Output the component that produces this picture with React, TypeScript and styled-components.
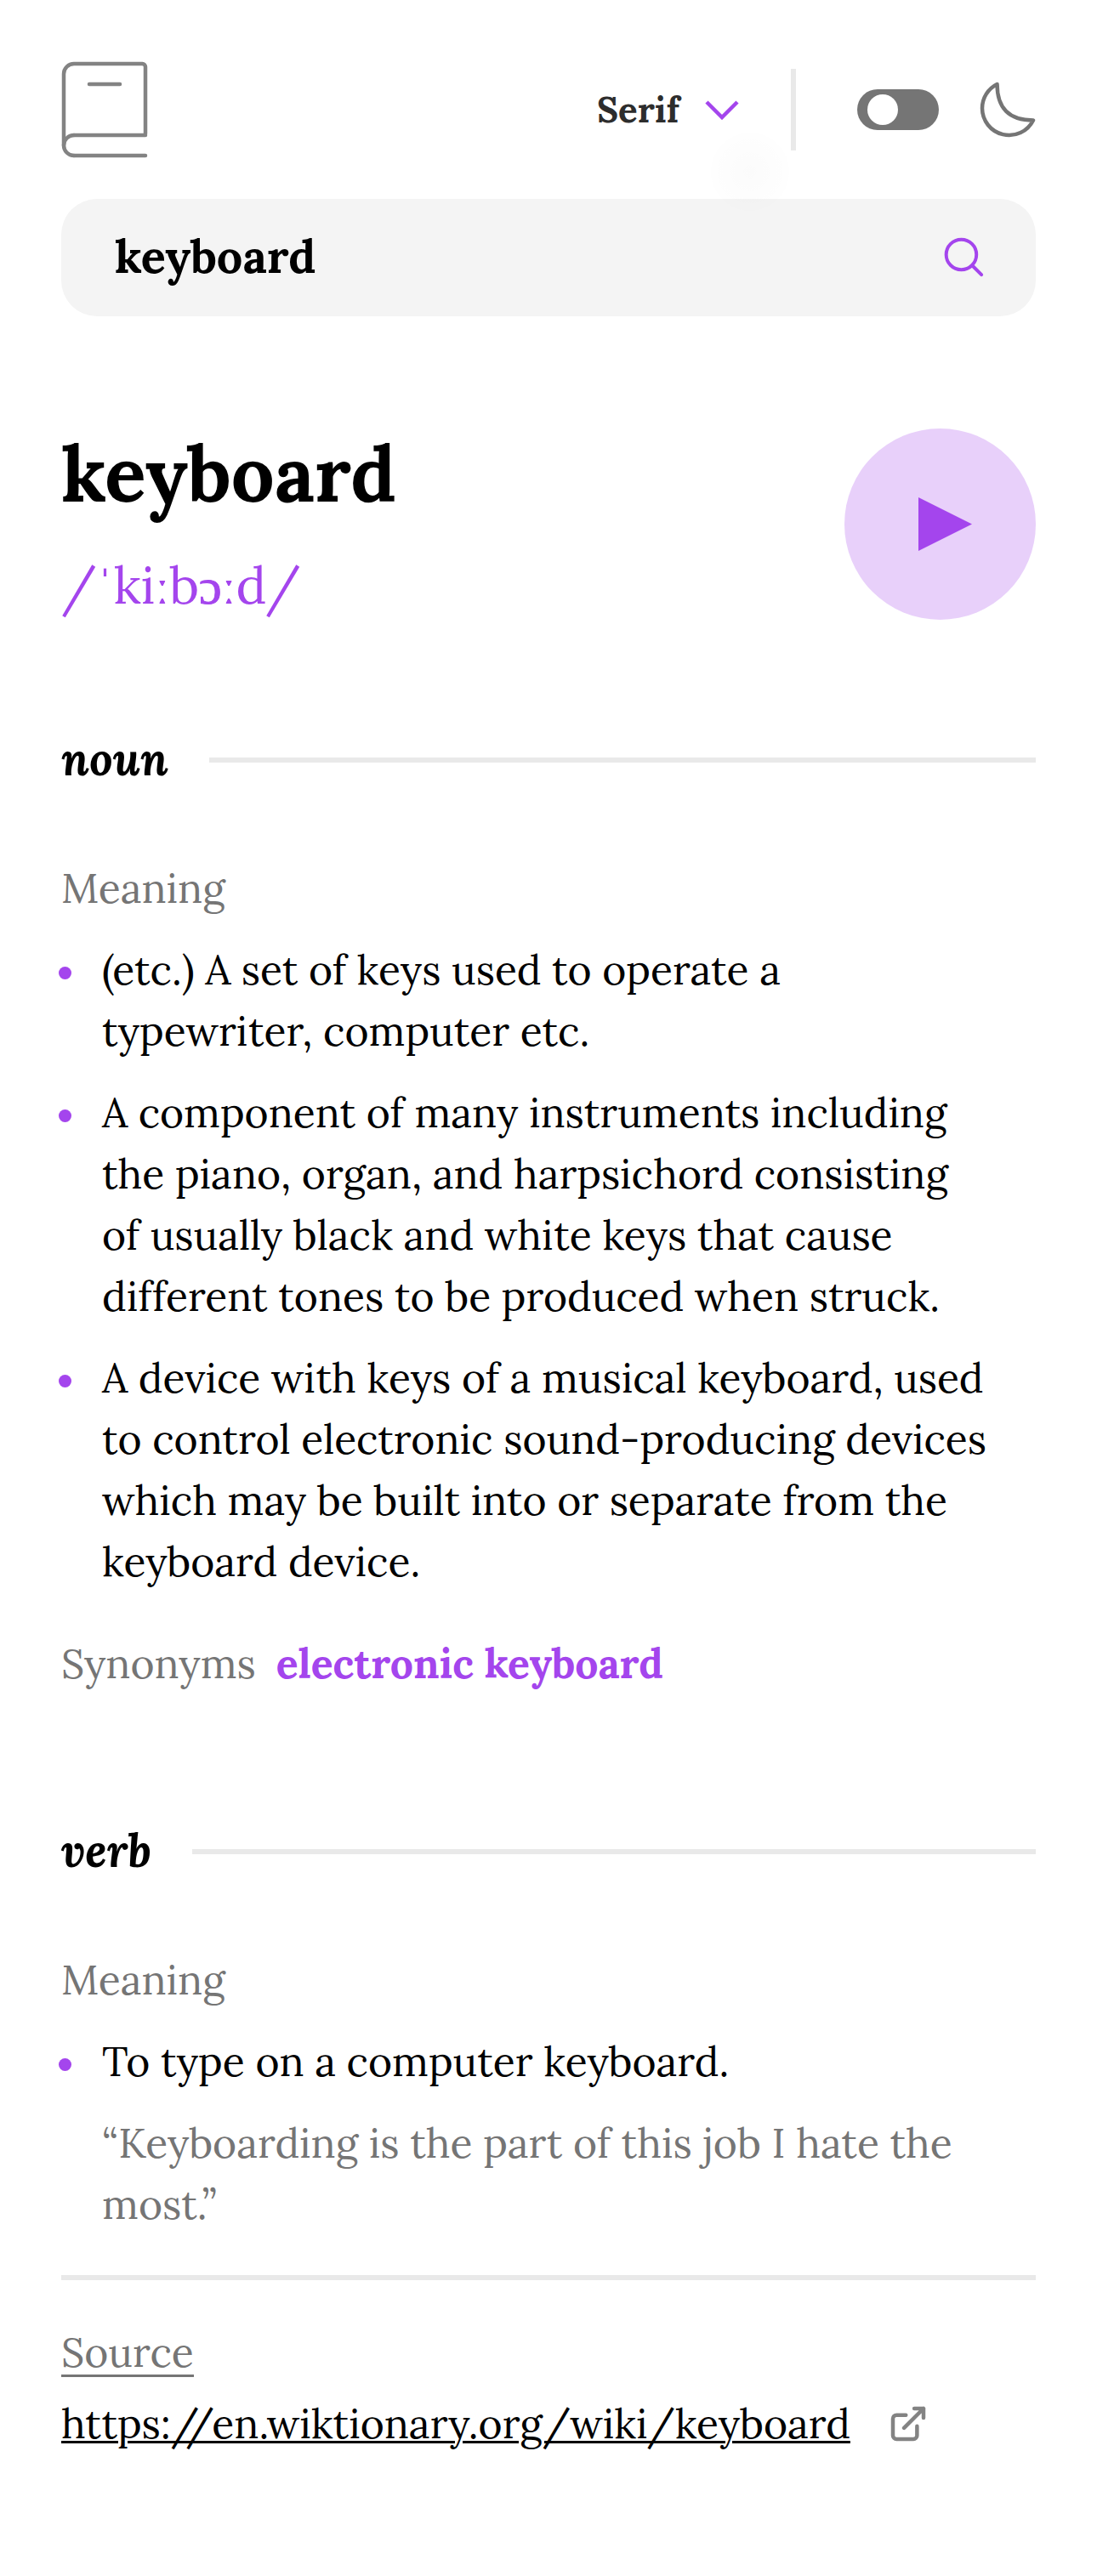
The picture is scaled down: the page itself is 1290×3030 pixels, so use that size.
import React from "react";
import styled, { createGlobalStyle } from "styled-components";

const serif = `Lora, "Liberation Serif", "Times New Roman", serif`;
const purple = "#a445ed";
const grey = "#757575";
const line = "#e9e9e9";

const GlobalStyle = createGlobalStyle`
  * { box-sizing: border-box; }
  body { margin: 0; background: #fff; color: #000; font-family: ${serif}; }
  h1, h2, h3, p, ul { margin: 0; padding: 0; font-size: inherit; font-weight: inherit; }
  svg { display: block; flex-shrink: 0; }
`;

const Page = styled.main`
  width: 1290px;
  height: 3030px;
  padding: 72px 72px 0;
  display: flex;
  flex-direction: column;
  overflow: hidden;
  font-size: 48px;
  line-height: 72px;
`;

const Header = styled.header`
  height: 114px;
  display: flex;
  align-items: center;
  justify-content: space-between;
`;

const Controls = styled.div`
  display: flex;
  align-items: center;
`;

const FontPicker = styled.button`
  position: relative;
  display: flex;
  align-items: center;
  justify-content: space-between;
  width: 168px;
  padding: 0;
  border: 0;
  background: none;
  color: #2d2d2d;
  font: 700 42px/72px ${serif};
`;

const MenuShadow = styled.span`
  position: absolute;
  left: 134px;
  top: 63px;
  width: 92px;
  height: 92px;
  border-radius: 50%;
  background: radial-gradient(closest-side, rgba(0, 0, 0, 0.014), rgba(0, 0, 0, 0.002));
`;

const Divider = styled.span`
  width: 6px;
  height: 96px;
  margin: 0 72px 0 60px;
  background: ${line};
`;

const Toggle = styled.span`
  display: flex;
  align-items: center;
  width: 96px;
  height: 48px;
  margin-right: 48px;
  padding-left: 12px;
  border-radius: 24px;
  background: ${grey};
`;

const Knob = styled.span`
  width: 36px;
  height: 36px;
  border-radius: 50%;
  background: #fff;
`;

const SearchBar = styled.div`
  display: flex;
  align-items: center;
  justify-content: space-between;
  height: 138px;
  margin-top: 48px;
  padding: 0 60px 0 63px;
  border-radius: 42px;
  background: #f4f4f4;
`;

const Query = styled.span`
  padding-bottom: 2px;
  font-size: 54px;
  font-weight: 700;
`;

const WordHead = styled.section`
  display: flex;
  align-items: center;
  justify-content: space-between;
  height: 225px;
  margin-top: 132px;
`;

const WordText = styled.div`
  padding-bottom: 3px;
`;

const Word = styled.h1`
  font-size: 90px;
  font-weight: 700;
  line-height: 120px;
`;

const Phonetic = styled.p`
  margin-top: 26px;
  font-size: 60px;
  line-height: 90px;
  color: ${purple};
`;

const Ipa = styled.span<{ $heavy?: boolean }>`
  font-family: "Liberation Serif", "Times New Roman", serif;
  line-height: 1;
  -webkit-text-stroke: ${(p) => (p.$heavy ? "1px" : "0")} currentColor;
`;

const PartRow = styled.div<{ $top: number }>`
  display: flex;
  align-items: center;
  gap: 48px;
  height: 78px;
  margin-top: ${(p) => p.$top}px;
`;

const Part = styled.h2`
  padding-bottom: 2px;
  font: italic 700 54px/72px ${serif};
`;

const Rule = styled.span`
  flex: 1;
  height: 6px;
  background: ${line};
`;

const Label = styled.h3`
  color: ${grey};
`;

const MeaningLabel = styled(Label)`
  margin-top: 76px;
`;

const List = styled.ul`
  display: flex;
  flex-direction: column;
  gap: 24px;
  margin-top: 24px;
  list-style: none;
`;

const Item = styled.li`
  display: grid;
  grid-template-columns: 15px 1fr;
  gap: 24px 36px;
  margin-left: -3px;
  padding-right: 50px;
`;

const Dot = styled.span`
  width: 15px;
  height: 15px;
  margin-top: 32px;
  border-radius: 50%;
  background: ${purple};
`;

const Quote = styled.p`
  grid-column: 2;
  color: ${grey};
`;

const Synonyms = styled.div`
  display: flex;
  gap: 24px;
  margin-top: 48px;
`;

const Synonym = styled.strong`
  color: ${purple};
`;

const Footer = styled.footer`
  display: flex;
  flex-direction: column;
  align-items: flex-start;
  margin-top: 47px;
  padding-top: 48px;
  border-top: 6px solid ${line};
`;

const SourceLabel = styled(Label)`
  height: 66px;
  padding-top: 1px;
  border-bottom: 3px solid ${grey};
`;

const SourceRow = styled.div`
  display: flex;
  align-items: center;
  gap: 47px;
  margin-top: 19px;
`;

const Link = styled.a`
  color: #000;
  text-decoration: underline;
  text-decoration-thickness: 3px;
  text-underline-offset: 3px;
`;

const nounMeanings = [
  "(etc.) A set of keys used to operate a typewriter, computer etc.",
  "A component of many instruments including the piano, organ, and harpsichord consisting of usually black and white keys that cause different tones to be produced when struck.",
  "A device with keys of a musical keyboard, used to control electronic sound-producing devices which may be built into or separate from the keyboard device.",
];

const BookLogo = () => (
  <svg width="102" height="114" viewBox="0 0 34 38" fill="none" stroke="#838383" strokeWidth="1.5" strokeLinecap="round">
    <path d="M1 33V5a4 4 0 0 1 4-4h26.8A1.2 1.2 0 0 1 33 2.2v26.228M5 29h28M5 37h28M11 9h12" />
    <path strokeLinejoin="round" d="M5 37a4 4 0 1 1 0-8" />
  </svg>
);

const Chevron = () => (
  <svg width="42" height="24" viewBox="0 0 14 8" fill="none" stroke={purple} strokeWidth="1.5">
    <path d="m1 1 6 6 6-6" />
  </svg>
);

const Moon = () => (
  <svg width="66" height="66" viewBox="0 0 22 22" fill="none" stroke={grey} strokeWidth="1.5" strokeLinecap="round" strokeLinejoin="round">
    <path d="M1 10.449a10.544 10.544 0 0 0 19.993 4.686C11.544 15.135 6.858 10.448 6.858 1A10.545 10.545 0 0 0 1 10.449Z" />
  </svg>
);

const SearchIcon = () => (
  <svg width="48" height="48" viewBox="0 0 18 18" fill="none" stroke={purple} strokeWidth="1.5" strokeLinecap="round" strokeLinejoin="round">
    <path d="m12.663 12.663 3.887 3.887M1 7.664a6.665 6.665 0 1 0 13.33 0 6.665 6.665 0 0 0-13.33 0Z" />
  </svg>
);

const PlayIcon = () => (
  <svg width="225" height="225" viewBox="0 0 75 75" fill={purple}>
    <circle cx="37.5" cy="37.5" r="37.5" opacity="0.25" />
    <path d="M29 27v21l21-10.5z" />
  </svg>
);

const ExternalIcon = () => (
  <svg width="42" height="42" viewBox="0 0 14 14" fill="none" stroke="#838383" strokeWidth="1.5" strokeLinecap="round" strokeLinejoin="round">
    <path d="M6.09 3.545H2.456A1.455 1.455 0 0 0 1 5v6.545A1.455 1.455 0 0 0 2.455 13H9a1.455 1.455 0 0 0 1.455-1.455V7.91m-5.091.727L13 1m0 0H9.364M13 1v3.636" />
  </svg>
);

export default function App() {
  return (
    <>
      <GlobalStyle />
      <Page>
        <Header>
          <BookLogo />
          <Controls>
            <FontPicker>
              Serif
              <Chevron />
              <MenuShadow />
            </FontPicker>
            <Divider />
            <Toggle>
              <Knob />
            </Toggle>
            <Moon />
          </Controls>
        </Header>

        <SearchBar>
          <Query>keyboard</Query>
          <SearchIcon />
        </SearchBar>

        <WordHead>
          <WordText>
            <Word>keyboard</Word>
            <Phonetic>
              /<Ipa>ˈ</Ipa>ki<Ipa>ː</Ipa>b<Ipa $heavy>ɔ</Ipa>
              <Ipa>ː</Ipa>d/
            </Phonetic>
          </WordText>
          <PlayIcon />
        </WordHead>

        <PartRow $top={126}>
          <Part>noun</Part>
          <Rule />
        </PartRow>
        <MeaningLabel>Meaning</MeaningLabel>
        <List>
          {nounMeanings.map((meaning) => (
            <Item key={meaning}>
              <Dot />
              <p>{meaning}</p>
            </Item>
          ))}
        </List>
        <Synonyms>
          <Label>Synonyms</Label>
          <Synonym>electronic keyboard</Synonym>
        </Synonyms>

        <PartRow $top={146}>
          <Part>verb</Part>
          <Rule />
        </PartRow>
        <MeaningLabel>Meaning</MeaningLabel>
        <List>
          <Item>
            <Dot />
            <p>To type on a computer keyboard.</p>
            <Quote>“Keyboarding is the part of this job I hate the most.”</Quote>
          </Item>
        </List>

        <Footer>
          <SourceLabel>Source</SourceLabel>
          <SourceRow>
            <Link>https://en.wiktionary.org/wiki/keyboard</Link>
            <ExternalIcon />
          </SourceRow>
        </Footer>
      </Page>
    </>
  );
}
